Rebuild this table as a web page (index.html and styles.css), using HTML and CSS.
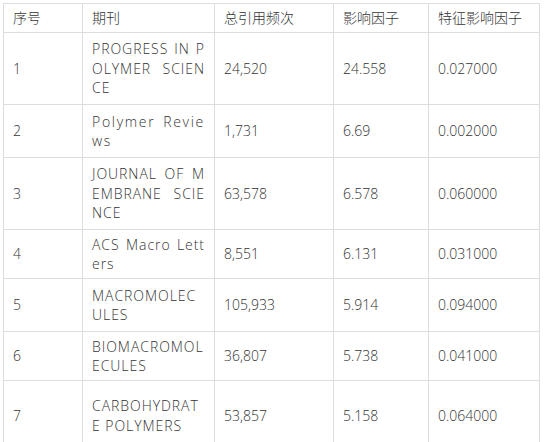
FILE: index.html
```html
<!DOCTYPE html>
<html lang="zh">
<head>
<meta charset="utf-8">
<link rel="stylesheet" href="styles.css">
</head>
<body>
<table class="tbl">
  <colgroup>
    <col class="c1"><col class="c2"><col class="c3"><col class="c4"><col class="c5">
  </colgroup>
  <thead>
    <tr class="head"><th>序号</th><th>期刊</th><th>总引用频次</th><th>影响因子</th><th>特征影响因子</th></tr>
  </thead>
  <tbody>
    <tr class="r3"><td>1</td><td class="name">PROGRESS IN POLYMER SCIENCE</td><td>24,520</td><td>24.558</td><td>0.027000</td></tr>
    <tr class="r2"><td>2</td><td class="name wide">Polymer Reviews</td><td>1,731</td><td>6.69</td><td>0.002000</td></tr>
    <tr class="r3"><td>3</td><td class="name">JOURNAL OF MEMBRANE SCIENCE</td><td>63,578</td><td>6.578</td><td>0.060000</td></tr>
    <tr class="r2s"><td>4</td><td class="name">ACS Macro Letters</td><td>8,551</td><td>6.131</td><td>0.031000</td></tr>
    <tr class="r2"><td>5</td><td class="name">MACROMOLECULES</td><td>105,933</td><td>5.914</td><td>0.094000</td></tr>
    <tr class="r2s"><td>6</td><td class="name">BIOMACROMOLECULES</td><td>36,807</td><td>5.738</td><td>0.041000</td></tr>
    <tr class="r2l"><td>7</td><td class="name">CARBOHYDRATE POLYMERS</td><td>53,857</td><td>5.158</td><td>0.064000</td></tr>
  </tbody>
</table>
</body>
</html>
```
FILE: styles.css
```css
html, body {
  margin: 0;
  padding: 0;
  background: #fff;
}
body {
  padding: 3px 0 0 3px;
  font-family: "Open Sans", "Noto Sans CJK SC", sans-serif;
  font-size: 14px;
  font-weight: 300;
  color: #333;
}
.tbl {
  border-collapse: collapse;
  table-layout: fixed;
  width: 536px;
}
.c1 { width: 79px; }
.c2 { width: 132px; }
.c3 { width: 119px; }
.c4 { width: 95px; }
.c5 { width: 111px; }
.tbl th, .tbl td {
  border: 1px solid #ddd;
  padding: 0 9px;
  text-align: left;
  font-weight: 300;
  line-height: 19.5px;
  vertical-align: middle;
}
.tbl .name {
  text-align: justify;
  word-break: break-all;
  letter-spacing: 0.95px;
}
.tbl .wide {
  letter-spacing: 1.7px;
}
.head { height: 29px; }
.r3 { height: 72px; }
.r2 { height: 53px; }
.r2s { height: 49px; }
.r2l { height: 70px; }
```
